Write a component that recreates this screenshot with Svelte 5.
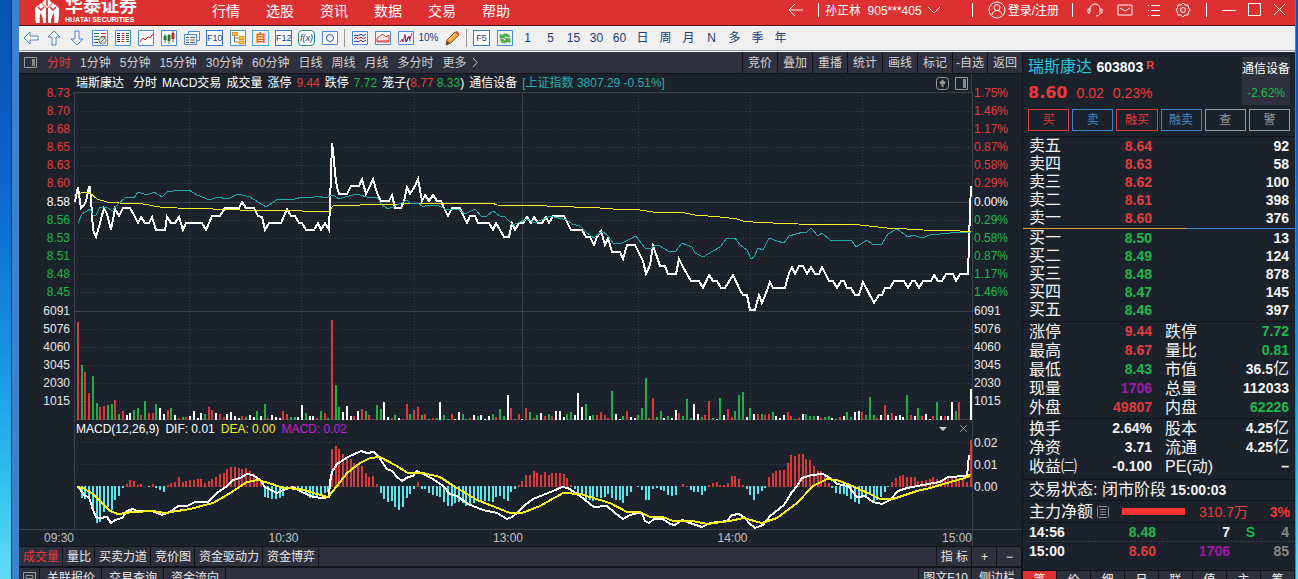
<script>
  const menu = ["行情", "选股", "资讯", "数据", "交易", "帮助"];

  const icons = {
    back: '<path d="M1 8 7 2v4h8v4H7v4z" fill="#fff" stroke="#4a7fc4"/>',
    up: '<path d="M8 1 14 7h-4v8H6V7H2z" fill="#fff" stroke="#4a7fc4"/>',
    down: '<path d="M8 15 2 9h4V1h4v8h4z" fill="#fff" stroke="#4a7fc4"/>',
    report:
      '<path d="M.5 .5h15v15H.5z" fill="#fff" stroke="#4a8ad8"/><path d="M2 3.500h5M2 6.500h5M2 9.500h5" stroke="#1d7a34"/><path d="M9 3.500h5M9 6.500h5" stroke="#c22" /><path d="M2 12.500h4" stroke="#333"/><circle cx="10.500" cy="10.500" r="3.500" fill="#ddd" stroke="#777"/><path d="m8 13 5-5" stroke="#777"/>',
    table:
      '<path d="M.5 .5h15v15H.5z" fill="#fff" stroke="#4a8ad8"/><path d="M2 3.500h3M2 5.500h3M2 7.500h3M2 9.500h3M2 11.500h3" stroke="#1a2a88"/><path d="M6.500 3.500h3M6.500 5.500h3M6.500 7.500h3M6.500 9.500h3M6.500 11.500h3" stroke="#c22"/><path d="M11 3.500h3M11 5.500h3M11 7.500h3M11 9.500h3M11 11.500h3" stroke="#1d7a34"/>',
    line: '<path d="M.5 .5h15v15H.5z" fill="#fff" stroke="#4a8ad8"/><path d="m2 12 3-4 2 2 3-3 2 1 3-4" fill="none" stroke="#c22"/>',
    candle:
      '<path d="M.5 .5h15v15H.5z" fill="#fff" stroke="#4a8ad8"/><path d="M4 4v9M8 4v10" stroke="#1d7a34"/><path d="M2.500 6h3v4h-3zM6.500 5h3v6h-3z" fill="#1d7a34"/><path d="M12 1v11" stroke="#c22"/><path d="M10.500 3h3v6h-3z" fill="#c22"/>',
    pages:
      '<path d="M4.500 1.500h11v9h-11z" fill="#fff" stroke="#4a8ad8"/><path d="M.5 4.500h12v10H.5z" fill="#fff" stroke="#4a8ad8"/><path d="M2 7.500h3M6 7.500h5M2 10h3M6 10h5M2 12.500h3M6 12.500h5" stroke="#555"/>',
    tree: '<path d="M.5 .5h15v15H.5z" fill="#fff" stroke="#4a8ad8"/><path d="M4.500 6v6h4M4.500 8h4" fill="none" stroke="#777"/><path d="M2.500 2.500h5v3h-5zM9 6.500h5v3H9zM9 11h5v3H9z" fill="#ffc54a" stroke="#d8901c"/>',
    ring: '<path d="M.5 1.500h15v13H.5z" fill="#fff" stroke="#4a8ad8"/><circle cx="8" cy="8" r="3.500" fill="none" stroke="#2a4e96"/>',
    waves:
      '<path d="M.5 1.500h15v13H.5z" fill="#fff" stroke="#4a8ad8"/><path d="m2 6 2-1 2 1 3-2 2 2 3-2" fill="none" stroke="#22a"/><path d="m2 9 2-2 2 2 3-2 2 2 3-2" fill="none" stroke="#c22"/><path d="m2 12 2-1 2 1 3-2 2 2 3-2" fill="none" stroke="#22a"/>',
    hills:
      '<path d="M.5 1.500h15v13H.5z" fill="#fff" stroke="#4a8ad8"/><path d="m2 8 3-2 3-2 3 3 3-2v7H2z" fill="#fbe4e4" stroke="#d33"/><path d="M2 11h12" stroke="#d33"/>',
    pulse:
      '<path d="M.5 1.500h15v13H.5z" fill="#fff" stroke="#4a8ad8"/><path d="m2 12 2-3 1 3 2-8M9 11l2-5M12 9l2-6" fill="none" stroke="#c22"/><path d="m7 5 1 7 2-5M11 6l1 5" fill="none" stroke="#22a"/>',
    pencil:
      '<path d="m2 15 1-5 8-8 4 3-8 8z" fill="#f4a640" stroke="#8a5a20"/><path d="m11 2 2-1 2 2v2z" fill="#d4505a"/><path d="m2 15 1-4 3 2z" fill="#444"/><path d="m5 10 6-6" stroke="#ffe09a"/>',
    refresh:
      '<path d="M.5 .5h15v15H.5z" fill="#eaf6ea" stroke="#4a8ad8"/><path d="M3 8V4l2 1.500C8 2.500 12 4 13 7H9.500C9 5.500 8 5.500 7 7l1 1zM13 8.500V13l-2-1.500C8 14 4 13 3 9.500h3.500c.5 1.500 2 1.500 2.500.5l-1-1.500z" fill="#52b04e" stroke="#2f8a34" stroke-width=".5"/>',
  };

  const tools = [
    { icon: "back" }, { icon: "up" }, { icon: "down" }, { icon: "report" },
    { icon: "table" }, { icon: "line" }, { icon: "candle" }, { icon: "pages" },
    { key: "F10" }, { icon: "tree" }, { key: "自", tone: "orange" },
    { key: "F12" }, { key: "f(x)", tone: "teal" }, { icon: "ring" },
    { sep: true },
    { icon: "waves" }, { icon: "hills" }, { icon: "pulse" },
    { text: "10%", narrow: true }, { icon: "pencil" },
    { sep: true },
    { key: "F5" }, { icon: "refresh" },
    ...["1", "5", "15", "30", "60", "日", "周", "月", "N", "多", "季", "年"].map((text) => ({ text })),
  ];

  const periods = ["分时", "1分钟", "5分钟", "15分钟", "30分钟", "60分钟", "日线", "周线", "月线", "多分时", "更多"];
  const actions = ["竞价", "叠加", "重播", "统计", "画线", "标记", "-自选", "返回"];

  const priceScale = [
    ["8.73", "1.75%"], ["8.70", "1.46%"], ["8.68", "1.17%"],
    ["8.65", "0.87%"], ["8.63", "0.58%"], ["8.60", "0.29%"],
  ];
  const lowScale = [
    ["8.58", "0.00%"], ["8.56", "0.29%"], ["8.53", "0.58%"],
    ["8.51", "0.87%"], ["8.48", "1.17%"], ["8.45", "1.46%"],
  ];
  const volScale = ["6091", "5076", "4060", "3045", "2030", "1015"];
  const macdScale = ["0.02", "0.01", "0.00"];
  const times = ["09:30", "10:30", "13:00", "14:00", "15:00"];

  const price =
    "75,202 76,196 78,187 81,208 84,205 86,201 89,187 90,187 92,213 93,230 96,237 100,223 104,208 107,214 111,230 115,209 119,216 123,208 130,208 134,215 138,223 141,217 145,223 149,223 152,217 156,230 165,230 167,217 171,223 175,223 179,217 183,230 186,223 202,223 206,230 212,216 220,216 225,208 239,208 242,202 246,208 254,208 258,216 262,217 265,230 269,223 281,223 287,209 291,216 295,216 299,223 302,223 306,230 314,230 318,223 321,230 325,223 329,230 330,203 332,143 333,150 335,173 337,187 339,194 347,194 351,186 359,186 362,179 366,194 370,186 373,179 377,193 381,201 389,201 392,195 395,208 401,208 404,201 407,187 410,194 415,186 418,179 422,201 425,195 429,201 433,195 437,201 441,201 444,208 448,216 452,208 460,208 463,215 467,223 470,216 475,216 478,223 489,223 493,230 496,223 504,237 509,237 512,223 515,230 519,223 523,223 527,217 531,223 534,217 538,223 542,223 546,217 549,223 553,216 564,216 571,230 582,230 586,237 590,237 594,245 597,237 601,231 605,245 608,238 612,252 620,252 623,259 627,245 635,245 643,261 646,274 650,265 653,246 657,257 660,266 665,266 668,274 676,274 679,259 683,267 691,281 699,281 703,288 709,275 713,281 717,281 721,288 725,288 733,275 740,290 743,295 747,295 750,310 755,310 759,295 762,303 766,293 770,282 773,288 785,288 789,273 792,267 795,274 799,266 803,266 807,274 811,267 815,274 819,274 822,267 829,281 833,281 837,288 841,281 844,281 847,288 851,288 855,295 859,295 863,282 874,303 879,295 882,295 885,288 890,288 894,281 904,281 908,288 912,281 915,281 919,288 923,281 931,281 934,275 938,281 942,281 946,274 953,274 956,281 960,274 968,274 970,210 971,186";
  const average =
    "78,196 82,192 90,193 97,199 107,202 120,203 143,204 160,207 177,208 213,209 240,210 297,210 302,211 329,211 333,206 360,205 400,204 420,203 492,203 497,205 547,206 600,208 613,209 640,210 653,212 685,213 695,215 720,217 737,219 743,221 753,222 773,223 798,224 860,225 887,228 907,229 923,230 960,231 971,231";
  const index =
    "78,223 82,214 90,209 93,215 96,215 100,207 107,207 112,211 117,205 126,197 134,198 138,192 147,195 154,192 162,197 167,192 180,190 189,190 197,195 210,200 217,197 228,199 238,194 250,197 266,207 278,199 295,199 302,197 310,198 318,196 325,198 333,195 339,199 345,197 357,194 370,198 377,197 382,205 388,209 395,206 407,200 410,203 418,203 423,207 427,205 437,205 447,210 458,209 465,214 475,209 482,217 487,216 493,211 500,216 505,217 513,225 527,219 535,223 550,216 567,220 572,224 580,226 587,233 594,238 602,231 608,236 613,243 622,243 636,236 645,248 650,249 655,245 660,246 668,251 676,251 682,243 692,247 695,253 703,257 713,251 720,247 727,238 735,238 740,245 747,250 751,259 754,257 758,248 763,250 769,238 777,241 784,243 789,236 803,232 807,232 811,228 818,236 822,233 830,240 852,241 856,247 867,240 872,244 882,244 888,234 897,229 908,237 913,235 922,238 930,235 960,232 971,233";
  const dif =
    "78,487 82,492 85,496 89,497 93,510 96,517 100,518 107,517 111,523 115,520 122,518 127,511 133,509 137,511 152,511 162,515 170,512 178,506 187,506 195,502 208,502 217,493 227,486 233,480 240,478 247,474 253,475 260,480 265,487 277,493 283,490 293,487 302,492 313,497 322,498 329,497 330,482 332,472 337,464 348,457 361,451 367,453 374,452 378,456 387,469 392,471 397,477 402,481 408,477 413,476 417,471 425,475 433,479 443,486 450,494 457,496 468,504 483,510 497,513 507,519 512,517 517,513 525,505 533,499 543,495 553,491 562,487 568,488 580,496 594,507 607,506 615,513 623,519 630,515 638,513 642,513 645,521 649,523 654,519 663,519 670,524 675,525 682,520 690,523 702,527 710,523 727,521 732,515 739,514 745,518 749,523 755,528 763,525 770,516 784,505 792,492 797,486 802,478 812,475 823,474 830,478 837,484 848,486 857,497 865,496 873,502 882,504 890,500 898,491 907,488 923,485 940,482 948,477 967,476 969,455";
  const dea =
    "77,487 83,488 93,494 102,503 110,511 118,514 133,512 153,511 165,513 190,509 213,503 227,495 247,482 258,480 272,484 283,488 300,489 317,494 328,497 333,491 347,473 360,463 370,458 380,457 395,465 408,473 423,473 440,477 452,485 477,500 495,507 510,513 522,513 540,506 563,493 580,494 610,503 627,512 640,512 650,517 663,517 673,521 693,521 707,524 730,521 743,518 762,523 777,518 797,503 813,486 827,479 837,480 850,485 870,494 880,499 893,499 917,491 930,488 947,483 968,477 970,474";

  // one bar per minute: direction letter followed by height
  const volume =
    "r98 g55 r48 r27 g44 g17 r13 r14 g15 g16 r20 g6 r9 w5 w7 g10 g12 r5 g19 r7 r7 g16 w12 w6 r10 g12 w5 r2 g3 r3 w4 w9 w2 w7 g6 r13 r10 w7 r6 r3 w6 w8 w4 w2 r4 g3 w5 w3 g9 w4 g16 r2 w5 w3 w2 r9 r6 g3 g3 w3 w15 g7 w4 w4 r2 g9 r7 g2 r100 g35 g13 w8 w14 w4 r4 w9 r11 g9 r5 r1 g15 g11 w18 w3 r2 g5 w2 r1 r16 g6 r10 r13 g5 r6 g1 r2 g2 w18 g5 g1 r6 w1 w8 g6 g1 r2 w5 g4 w5 w1 w4 g6 r3 g11 g4 w25 r12 g1 r6 w1 r12 g8 r2 g5 w7 r4 g6 r4 w9 w9 w3 g6 g8 w5 w27 w13 g16 w4 g5 r5 r8 r5 r2 g29 w6 w1 g4 r9 w3 w2 g5 g12 g42 r2 r22 g3 g9 w2 g4 w2 w10 r7 g4 g21 g2 w16 w6 g3 r5 r19 g2 w1 g22 w5 r11 r3 g9 g25 g28 w3 g12 w6 r6 g6 r5 r6 g8 w4 w2 w5 r8 r4 g1 r2 w6 g6 g4 g4 w4 r2 g3 g4 w2 g1 r3 w4 g8 g3 w8 w9 r8 g5 g23 g5 r2 w5 r15 w5 r7 w4 w5 w3 g25 r5 w4 g12 r4 w6 w1 r4 g18 w4 r4 w4 w18 g9 r18 w0 w0 w31"
      .split(" ")
      .map((bar) => ({ dir: bar[0], size: Number(bar.slice(1)) }));

  const macd = [
    0, -12, -13, -12, -25, -37, -36, -26, -21, -24, -14, -10, -2, 3, 7, 6, 2, 3, 0, -1,
    3, -2, -4, -6, 2, 4, 5, 10, 5, 6, 7, 7, 8, 8, 4, 6, 8, 10, 13, 14,
    18, 20, 20, 19, 18, 19, 16, 13, 11, 5, -11, -12, -13, -13, -12, -10, -3, 1, 1, -2,
    -5, -9, -12, -12, -11, -8, -7, -6, 38, 41, 38, 33, 29, 28, 24, 22, 21, 14, 10, 11, 3,
    -7, -13, -16, -15, -21, -24, -21, -12, -8, -3, 5, -3, -3, -7, -9, -10, -11, -16, -20, -20,
    -17, -16, -17, -20, -19, -17, -15, -16, -15, -15, -16, -11, -10, -13, -15, -6, -3, 2, 6, 12,
    12, 16, 14, 12, 15, 12, 14, 14, 14, 13, 9, 2, -3, -9, -9, -15, -14, -15, -11, -12,
    -11, -8, -12, -14, -14, -17, -10, -6, 0, -1, -4, -14, -14, -3, -2, -4, -5, -9, -10, -9,
    0, 3, 1, -4, -6, -6, -9, -5, 2, 4, 5, 2, 2, 4, 11, 11, 8, 2, -3, -9, -14, -8, -5, -2, 10, 14,
    16, 17, 17, 24, 32, 31, 33, 33, 28, 27, 21, 16, 16, 11, 4, -2, -7, -8, -8, -10,
    -13, -16, -18, -12, -11, -8, -15, -14, -11, -6, -1, 5, 9, 11, 12, 10, 10, 10, 6, 6,
    7, 8, 10, 8, 6, 7, 10, 9, 9, 7, 8, 5, 47,
  ];

  const barX = (i) => Math.round(77 + i * 3.735);

  const dottedRows = [111, 129, 147, 165, 183, 220, 238, 256, 274, 292, 329, 347, 365, 383, 401];
  const dottedCols = [189, 301, 414, 638, 750, 862];

  const studies = ["成交量", "量比", "买卖力道", "竞价图", "资金驱动力", "资金博弈"];
  const links = ["关联报价", "交易查询", "资金流向"];

  const trades = [
    ["买", "red"], ["卖", "blue"], ["融买", "red"],
    ["融卖", "blue"], ["查", "gray"], ["警", "gray"],
  ];
  const asks = [["卖五", "8.64", 92], ["卖四", "8.63", 58], ["卖三", "8.62", 100], ["卖二", "8.61", 398], ["卖一", "8.60", 376]];
  const bids = [["买一", "8.50", 13], ["买二", "8.49", 124], ["买三", "8.48", 878], ["买四", "8.47", 145], ["买五", "8.46", 397]];

  const stats = [
    ["涨停", "9.44", "up", "跌停", "7.72", "down"],
    ["最高", "8.67", "up", "量比", "0.81", "down"],
    ["最低", "8.43", "down", "市值", "36.5", "", "亿"],
    ["现量", "1706", "purple", "总量", "112033", ""],
    ["外盘", "49807", "up", "内盘", "62226", "down"],
  ];
  const basics = [
    ["换手", "2.64%", "股本", "4.25", "亿"],
    ["净资", "3.71", "流通", "4.25", "亿"],
    ["收益㈡", "-0.100", "PE(动)", "–"],
  ];
  const sideTabs = ["笔", "价", "细", "日", "联", "值", "主", "筹"];

  let period = "分时";
  let study = "成交量";
  let sideTab = "笔";
</script>

<div class="desktop">
  <div class="window">
    <header class="titlebar">
      <div class="brand">
        <svg width="24" height="28" viewBox="0 0 24 28" aria-hidden="true">
          <path d="M0 12 6 7l5 5v15H8c0-5-1-8-3-10 0 4-1 8 0 10H1c-1-4-1-10-1-15zM24 12l-6-5-5 5v15h3c0-5 1-8 3-10 0 4 1 8 0 10h4c1-4 1-10 1-15zM7 7l5-6 5 6-5 5z" fill="#fff" />
          <path d="m3 11 3 3 3-3M15 11l3 3 3-3M12 3v7" fill="none" stroke="#dd3030" stroke-width="1.500" />
        </svg>
        <div class="brand-text">
          <strong>华泰证券</strong>
          <small>HUATAI SECURITIES</small>
        </div>
      </div>
      <nav class="menu">
        {#each menu as item}
          <button>{item}</button>
        {/each}
      </nav>
      <div class="account">
        <button aria-label="后退">
          <svg width="16" height="14" viewBox="0 0 16 14"><path d="M15 7H1M7 1 1 7l6 6" /></svg>
        </button>
        <i class="bar"></i>
        <button class="user">孙正林&nbsp; 905***405
          <svg width="14" height="8" viewBox="0 0 14 8"><path d="m1 1 6 6 6-6" /></svg>
        </button>
      </div>
      <i class="bar"></i>
      <button class="login">
        <svg width="18" height="18" viewBox="0 0 18 18">
          <circle cx="9" cy="9" r="8" /><circle cx="9" cy="6.500" r="3" /><path d="M4 14c0-6 10-6 10 0" />
        </svg>
        登录/注册
      </button>
      <i class="bar"></i>
      <div class="sys">
        <button aria-label="客服">
          <svg width="16" height="16" viewBox="0 0 16 16"><path d="M3 10V7a5 5 0 0 1 10 0v3M3 7H1v4h2M13 7h2v4h-2M13 11c0 2-2 3-4 3" /></svg>
        </button>
        <button aria-label="消息">
          <svg width="16" height="16" viewBox="0 0 16 16"><path d="M1 3h14v10H1zM3 6l5 3 5-3" /></svg>
        </button>
        <button aria-label="列表">
          <svg width="14" height="16" viewBox="0 0 14 16"><path d="M1 3.500h1M4 3.500h9M1 8.500h1M4 8.500h9M1 13.500h1M4 13.500h9" /></svg>
        </button>
        <button aria-label="设置">
          <svg width="16" height="16" viewBox="0 0 16 16"><path d="m6 3 2-2 2 2h3l.5 3L15 8l-1.500 2-.5 3h-3l-2 2-2-2H3l-.5-3L1 8l1.500-2L3 3z" /><circle cx="8" cy="8" r="2.500" /></svg>
        </button>
      </div>
      <i class="bar"></i>
      <div class="controls">
        <button aria-label="最小化"><svg width="14" height="14" viewBox="0 0 14 14"><path d="M0 7.500h14" /></svg></button>
        <button aria-label="最大化"><svg width="13" height="13" viewBox="0 0 13 13"><path d="M.5 .5h12v12H.5z" /></svg></button>
        <button aria-label="关闭"><svg width="13" height="13" viewBox="0 0 13 13"><path d="m1 1 11 11M12 1 1 12" /></svg></button>
      </div>
    </header>

    <div class="toolbar">
      {#each tools as tool}
        {#if tool.sep}
          <i class="tool-sep"></i>
        {:else}
          <button class="tool" aria-label={tool.icon}>
            {#if tool.icon}
              <svg width="16" height="16" viewBox="0 0 16 16" fill="none">{@html icons[tool.icon]}</svg>
            {:else if tool.key}
              <span class="key {tool.tone ?? ''}">{tool.key}</span>
            {:else}
              <span class:narrow={tool.narrow}>{tool.text}</span>
            {/if}
          </button>
        {/if}
      {/each}
    </div>

    <main>
      <section class="chart">
        <div class="periods">
          <svg class="pane-icon" width="13" height="11" viewBox="0 0 13 11"><path d="M.5 .5h12v10H.5z" /><path d="M8 2h3v7H8z" fill="#888" stroke="none" /></svg>
          {#each periods as item}
            <button class:active={period === item} onclick={() => (period = item)}>{item}</button>
          {/each}
          <svg class="more" width="6" height="9" viewBox="0 0 6 9"><path d="m1 0 4 4.500L1 9" /></svg>
          <div class="actions">
            {#each actions as item}
              <button>{item}</button>
            {/each}
          </div>
        </div>

        <div class="caption">
          <span class="stock">瑞斯康达</span>
          <span>分时</span>
          <span>MACD交易</span>
          <span>成交量</span>
          <span>涨停</span><span class="up">9.44</span>
          <span>跌停</span><span class="down">7.72</span>
          <span>笼子(<b class="up">8.77</b> <b class="down">8.33</b>)</span>
          <span>通信设备</span>
          <span class="index">[上证指数 3807.29 -0.51%]</span>
          <div class="caption-icons">
            <svg width="13" height="13" viewBox="0 0 13 13"><rect x=".5" y=".5" width="12" height="12" rx="3" /><path d="M6.500 10V4M4 6.500 6.500 4 9 6.500" stroke-width="2" /></svg>
            <svg width="13" height="13" viewBox="0 0 13 13"><path d="M.5 .5h12v12H.5z" /><path d="M8 2h3v9H8z" fill="#888" stroke="none" /></svg>
          </div>
        </div>

        <div class="plot">
          <div class="scale left">
            <div class="up">{#each priceScale as row}<span>{row[0]}</span>{/each}</div>
            <div class="down">{#each lowScale as row}<span>{row[0]}</span>{/each}</div>
            <div>{#each volScale as v}<span>{v}</span>{/each}</div>
          </div>

          <div class="canvas">
            <svg class="price-svg" viewBox="74 92 898 328" preserveAspectRatio="none">
              <g class="grid">
                <path d="M74 92.500h898M74 202.500h898M74 311.500h898M74 419.500h898M74.500 92v328M522.500 92v328" />
                {#each dottedRows as y}
                  <path class="dots" d="M77 {y + 0.5}h894" />
                {/each}
                {#each dottedCols as x}
                  <path class="dots" d="M{x + 0.5} 93v326" />
                {/each}
              </g>
              {#each volume as bar, i}
                <rect class="v-{bar.dir}" x={barX(i)} y={420 - bar.size} width="2" height={bar.size} />
              {/each}
              <polyline class="white" points={price} />
              <polyline class="thin yellow" points={average} />
              <polyline class="thin teal" points={index} />
            </svg>
            <div class="macd-head">
              <span>MACD(12,26,9)</span>
              <span>DIF: 0.01</span>
              <span class="c-yellow">DEA: 0.00</span>
              <span class="c-purple">MACD: 0.02</span>
              <div class="macd-tools">
                <svg width="8" height="4" viewBox="0 0 8 4"><path d="M0 0h8L4 4z" fill="#ccc" stroke="none" /></svg>
                <svg width="7" height="7" viewBox="0 0 7 7"><path d="m0 0 7 7M7 0 0 7" /></svg>
              </div>
            </div>
            <svg class="macd-svg" viewBox="74 437 898 92" preserveAspectRatio="none">
              <g class="grid">
                <path d="M74.500 437v92" />
                <path class="dots" d="M77 442.500h894M77 464.500h894M77 486.500h894" />
              </g>
              {#each macd as v, i}
                <rect class={v > 0 ? "v-r" : "v-c"} x={barX(i)} y={v > 0 ? 487 - v : 486} width="2" height={Math.abs(v)} />
              {/each}
              <polyline class="white" points={dif} />
              <polyline class="yellow" points={dea} />
            </svg>
          </div>

          <div class="scale right">
            <div class="up">{#each priceScale as row}<span>{row[1]}</span>{/each}</div>
            <div class="down">{#each lowScale as row}<span>{row[1]}</span>{/each}</div>
            <div>{#each volScale as v}<span>{v}</span>{/each}</div>
            <div class="macd-scale">{#each macdScale as v}<span>{v}</span>{/each}</div>
          </div>
        </div>

        <div class="times">
          {#each times as time}
            <span>{time}</span>
          {/each}
          <i></i>
        </div>

        <div class="tabs">
          {#each studies as item}
            <button class:active={study === item} onclick={() => (study = item)}>{item}</button>
          {/each}
          <div class="tabs-end">
            <button class="wide">指 标</button>
            <button class="sign">+</button>
            <button class="sign">−</button>
          </div>
        </div>
        <div class="tabs links">
          <button aria-label="面板">
            <svg width="13" height="13" viewBox="0 0 13 13"><path d="M.5 .5h12v12H.5zM3 3.500h7v3H3z" /></svg>
          </button>
          {#each links as item}
            <button class="link">{item}</button>
          {/each}
          <div class="tabs-end">
            <button>图文F10</button>
            <button class="sidebar">侧边栏</button>
          </div>
        </div>
      </section>

      <aside>
        <div class="quote">
          <div>
            <h1>瑞斯康达 <b>603803</b><sup>R</sup></h1>
            <p class="last"><strong>8.60</strong><span>0.02</span><span>0.23%</span></p>
          </div>
          <a class="sector" href="#sector">通信设备<span>-2.62%</span></a>
        </div>
        <div class="trades">
          {#each trades as [name, tone]}
            <button class={tone}>{name}</button>
          {/each}
        </div>

        <table class="book asks">
          <tbody>
            {#each asks as [name, value, lots]}
              <tr><th>{name}</th><td class="up">{value}</td><td>{lots}</td></tr>
            {/each}
          </tbody>
        </table>
        <div class="split"><i></i></div>
        <table class="book">
          <tbody>
            {#each bids as [name, value, lots]}
              <tr><th>{name}</th><td class="down">{value}</td><td>{lots}</td></tr>
            {/each}
          </tbody>
        </table>

        <table class="stats">
          <tbody>
            {#each stats as [a, av, ac, b, bv, bc, unit]}
              <tr><th>{a}</th><td class={ac}>{av}</td><th>{b}</th><td class={bc}>{bv}{#if unit}<span>{unit}</span>{/if}</td></tr>
            {/each}
          </tbody>
        </table>
        <table class="stats basics">
          <tbody>
            {#each basics as [a, av, b, bv, unit]}
              <tr><th>{a}</th><td>{av}</td><th>{b}</th><td>{bv}{#if unit}<span>{unit}</span>{/if}</td></tr>
            {/each}
          </tbody>
        </table>

        <div class="status">交易状态: 闭市阶段 <b>15:00:03</b></div>
        <div class="flow">
          <span>主力净额</span>
          <svg width="12" height="12" viewBox="0 0 12 12"><rect x=".5" y=".5" width="11" height="11" rx="1" /><path d="M3 3.500h6M3 6h6M3 8.500h6" /></svg>
          <i></i>
          <em>310.7万</em>
          <b>3%</b>
        </div>

        <table class="ticks">
          <tbody>
            <tr><td>14:56</td><td class="down">8.48</td><td>7</td><td class="down">S</td><td class="dim">4</td></tr>
            <tr><td>15:00</td><td class="up">8.60</td><td class="purple">1706</td><td></td><td class="dim">85</td></tr>
          </tbody>
        </table>

        <div class="side-tabs">
          {#each sideTabs as item}
            <button class:active={sideTab === item} onclick={() => (sideTab = item)}>{item}</button>
          {/each}
        </div>
      </aside>
    </main>
  </div>
</div>

<style>
  :global(body) {
    margin: 0;
    overflow: hidden;
    background: #1c222b;
  }

  .desktop {
    box-sizing: border-box;
    height: 100vh;
    overflow: hidden;
    padding: 0 3px 0 12px;
    background: linear-gradient(#0a52b4, #0b63cc 30%, #1590e4 60%, #35c4f0 85%, #62dcf4);
    font-family: "Liberation Sans", "Noto Sans CJK SC", sans-serif;
    font-size: 12px;
    color: #e8e8e8;
  }

  .window {
    border-left: 7px solid #3f82cc;
    box-shadow: -1px 0 #0c3468, inset 1px 0 #bcdcf4, 1px 0 #4f7fb4;
  }

  button {
    padding: 0;
    border: 0;
    background: none;
    color: inherit;
    font: inherit;
    white-space: nowrap;
    cursor: pointer;
  }

  svg {
    display: block;
    flex: none;
  }

  .up { color: #e23c3c; }
  .down { color: #1fb84c; }
  .purple { color: #a318a8; }

  /* title bar */
  .titlebar {
    display: flex;
    align-items: center;
    height: 31px;
    margin-top: -6px;
    border-bottom: 1px solid #4a1014;
    padding-right: 9px;
    background: #dd3030;
    color: #fff;
  }

  .titlebar svg {
    fill: none;
    stroke: #fff;
  }

  .brand {
    display: flex;
    align-items: center;
    gap: 6px;
    width: 177px;
    padding-left: 16px;
  }

  .brand svg { stroke: none; }

  .brand-text strong {
    display: block;
    font-size: 18px;
    line-height: 20px;
  }

  .brand-text small {
    display: block;
    font-size: 7px;
    font-weight: bold;
    line-height: 8px;
  }

  .menu {
    display: flex;
    gap: 26px;
    flex: 1;
    font-size: 14px;
  }

  .account,
  .user,
  .login,
  .sys,
  .controls {
    display: flex;
    align-items: center;
  }

  .account { margin-right: 31px; }
  .account .bar { margin: 0 6px 0 14px; }
  .user { gap: 5px; }
  .login { gap: 2px; margin: 0 13px 0 15px; }
  .sys { gap: 14px; margin: 0 15px 0 14px; }
  .controls { gap: 12px; margin-left: 15px; }

  .bar {
    width: 1px;
    height: 14px;
    background: #fff;
  }

  /* icon toolbar */
  .toolbar {
    display: flex;
    align-items: center;
    height: 24px;
    border-bottom: 1px solid #999;
    box-shadow: 0 1px #fff;
    background: #f0f0f0;
    color: #1a3a78;
  }

  .tool {
    display: flex;
    align-items: center;
    justify-content: center;
    width: 23px;
    height: 22px;
    line-height: 16px;
  }

  .tool-sep {
    width: 1px;
    height: 18px;
    margin: 0 3px;
    background: #999;
  }

  .key {
    box-sizing: border-box;
    width: 17px;
    height: 16px;
    border: 1px solid #3a7cc8;
    background: #fff;
    font-size: 9px;
    line-height: 14px;
    text-align: center;
  }

  .key.orange {
    border-color: #4aa8e0;
    background: #fff0dc;
    color: #e06010;
    font-size: 11px;
    font-weight: bold;
  }

  .key.teal {
    border-color: #2a8a90;
    border-radius: 4px;
    font-style: italic;
  }

  .narrow { font-size: 10px; }

  /* main area */
  main {
    display: flex;
    margin-top: 1px;
    background: #1c222b;
  }

  .chart {
    flex: 1;
    min-width: 0;
  }

  .periods {
    display: flex;
    align-items: center;
    gap: 9px;
    height: 21px;
    border-bottom: 1px solid #11151b;
    background: #2f303d;
    color: #d0d0d0;
    line-height: 18px;
  }

  .periods svg,
  .caption svg,
  .macd-head svg,
  .links svg {
    fill: none;
    stroke: #999;
  }

  .pane-icon { margin: 0 1px 0 5px; }
  .periods .more { margin-left: -4px; stroke: #ccc; }
  .active { color: #e23c3c; }

  .actions {
    display: flex;
    height: 100%;
    margin-left: auto;
  }

  .actions button {
    box-sizing: border-box;
    width: 35px;
    border-left: 1px solid #11151b;
  }

  .caption {
    display: flex;
    align-items: center;
    gap: 5px;
    height: 18px;
    margin-right: 50px;
    padding-left: 57px;
    border-right: 1px solid #3a404c;
    color: #fff;
    line-height: 16px;
    white-space: nowrap;
  }

  .caption b { font-weight: normal; }
  .stock { margin-right: 4px; }
  .index { color: #27b0b0; }

  .caption-icons {
    display: flex;
    gap: 6px;
    margin-left: auto;
    padding-right: 3px;
  }

  .plot {
    display: flex;
    align-items: flex-start;
  }

  .scale {
    box-sizing: border-box;
    display: flex;
    flex-direction: column;
    gap: 1px;
    padding-top: 1px;
    margin-top: -9px;
    line-height: 18px;
  }

  .scale span { display: block; }
  .scale .down span:first-child { color: #fff; }

  .left {
    width: 55px;
    padding-right: 4px;
    text-align: right;
  }

  .right {
    width: 50px;
    padding-left: 2px;
  }

  .macd-scale {
    padding-top: 21px;
    line-height: 22px;
  }

  .canvas {
    flex: 1;
    min-width: 0;
    border-right: 1px solid #3a404c;
    margin-right: -1px;
  }

  .canvas > svg {
    width: 100%;
    shape-rendering: crispEdges;
  }

  .price-svg { height: 328px; }
  .macd-svg { height: 92px; }

  .grid path {
    fill: none;
    stroke: #3a404c;
  }

  .grid .dots { stroke-dasharray: 1 2; }

  polyline {
    fill: none;
    stroke-width: 2;
  }

  .white { stroke: #fff; }
  .yellow { stroke: #f6f022; }
  .teal { stroke: #23a9ab; }
  .thin { stroke-width: 1; }

  .v-r { fill: #dc3838; }
  .v-g { fill: #1fae4a; }
  .v-w { fill: #fff; }
  .v-c { fill: #5ce6ec; }

  .macd-head {
    display: flex;
    align-items: center;
    gap: 6px;
    height: 17px;
    padding: 0 5px 0 1px;
    border-left: 1px solid #3a404c;
    color: #fff;
  }

  .c-yellow { color: #f6f022; }
  .c-purple { color: #c81ed0; }

  .macd-tools {
    display: flex;
    align-items: center;
    gap: 13px;
    margin-left: auto;
  }

  .times {
    display: grid;
    grid-template-columns: 55px repeat(4, 1fr) 50px;
    height: 16px;
    border-top: 1px solid #3a404c;
    color: #c0c0c0;
    line-height: 16px;
    text-align: right;
  }

  .times i { border-left: 1px solid #3a404c; }

  .tabs {
    display: flex;
    height: 19px;
    border-top: 1px solid #11151b;
    background: #2f303d;
    line-height: 16px;
  }

  .tabs button {
    padding: 0 3px 0 4px;
    border-right: 1px solid #11151b;
  }

  .tabs-end {
    display: flex;
    margin-left: auto;
    border-left: 1px solid #11151b;
  }

  .tabs .sign { width: 25px; }

  .links {
    height: 20px;
    border-top-width: 2px;
  }

  .tabs .link { padding: 0 6px 0 7px; }
  .tabs .sidebar { width: 50px; }

  /* quote panel */
  aside {
    width: 272px;
    border-left: 1px solid #11151b;
    font-size: 14px;
    font-weight: bold;
    color: #f4f4f4;
  }

  .quote {
    display: flex;
    justify-content: space-between;
    padding: 5px 5px 0;
    height: 52px;
  }

  h1 {
    margin: 0;
    color: #2cc4dc;
    font-size: 16px;
    font-weight: normal;
    line-height: 20px;
  }

  h1 b {
    color: #fff;
    font-size: 14px;
  }

  sup {
    margin-left: 3px;
    color: #e04848;
    font-size: 11px;
    font-weight: bold;
    line-height: 0;
    vertical-align: 3px;
  }

  .last {
    display: flex;
    align-items: center;
    gap: 9px;
    margin: 5px 0 0;
    color: #f03838;
    line-height: 22px;
  }

  .last strong {
    font-family: "DejaVu Sans", sans-serif;
    font-size: 16px;
  }

  .last span { font-weight: normal; }

  .sector {
    height: 48px;
    background: #2f303d;
    color: #fff;
    font-size: 12px;
    font-weight: normal;
    line-height: 24px;
    text-align: center;
    text-decoration: none;
  }

  .sector span {
    display: block;
    color: #1fb84c;
  }

  .trades {
    display: grid;
    grid-template-columns: repeat(6, 1fr);
    gap: 3px;
    padding: 0 5px 5px;
    border-bottom: 1px solid #11151b;
    font-size: 12px;
    font-weight: normal;
    line-height: 16px;
  }

  .trades button {
    height: 22px;
    border: 1px solid;
  }

  .red { color: #e23c3c; }
  .blue { color: #3d88cc; }
  .gray { color: #999; }

  table {
    width: 100%;
    border-spacing: 0;
    table-layout: fixed;
  }

  th {
    padding: 0 0 0 6px;
    font-size: 16px;
    font-weight: normal;
    text-align: left;
    white-space: nowrap;
  }

  td {
    padding: 0 6px 0 0;
    text-align: right;
    white-space: nowrap;
  }

  .book tr {
    height: 18px;
    line-height: 18px;
  }

  .book th { width: 66px; }
  .book td:nth-child(2) { width: 57px; padding: 0; }

  .asks { margin-bottom: 1px; }

  .split {
    height: 1px;
    background: #3d88cc;
  }

  .split i {
    display: block;
    width: 60%;
    height: 1px;
    background: #d8a038;
  }

  .stats {
    margin-top: 2px;
    border-top: 1px solid #11151b;
  }

  .basics { margin: 1px 0 3px; }

  .stats tr {
    height: 19px;
    line-height: 19px;
  }

  .stats th:first-child { width: 66px; }
  .stats td:nth-child(2) { width: 57px; padding: 0; }
  .stats th:nth-child(3) { width: 48px; padding-left: 13px; }

  .stats span {
    font-size: 16px;
    font-weight: normal;
    line-height: 16px;
  }

  .status {
    height: 20px;
    padding: 0 6px;
    border: solid #11151b;
    border-width: 1px 0;
    font-size: 16px;
    font-weight: normal;
    line-height: 20px;
  }

  .status b { font-size: 14px; }

  .flow {
    display: flex;
    align-items: center;
    height: 21px;
    padding: 0 5px 0 6px;
    border-bottom: 1px solid #11151b;
    color: #f03838;
    line-height: 18px;
  }

  .flow span {
    color: #f4f4f4;
    font-size: 16px;
    font-weight: normal;
  }

  .flow svg {
    margin: 0 13px 0 4px;
    fill: none;
    stroke: #888;
  }

  .flow i {
    width: 63px;
    height: 7px;
    background: #ff3434;
  }

  .flow em {
    margin-left: 14px;
    font-style: normal;
    font-weight: normal;
  }

  .flow b { margin-left: auto; }

  .ticks { margin-bottom: 10px; }

  .ticks tr {
    height: 18px;
    line-height: 18px;
  }

  .ticks tr + tr td { border-top: 1px dotted #3a404c; }
  .ticks td:first-child { padding-left: 6px; text-align: left; }
  .ticks td:nth-child(2) { width: 68px; }
  .ticks td:nth-child(3) { width: 68px; }
  .ticks td:nth-child(4) { width: 19px; }
  .ticks td:last-child { width: 28px; }
  .ticks .dim { color: #888; }

  .side-tabs {
    display: grid;
    grid-template-columns: repeat(8, 1fr);
    border-top: 1px solid #11151b;
    background: #2f303d;
    font-size: 12px;
    font-weight: normal;
  }

  .side-tabs button {
    height: 18px;
    border-right: 1px solid #11151b;
    line-height: 16px;
  }

  .side-tabs .active {
    background: #dd3030;
    color: #fff;
  }
</style>
